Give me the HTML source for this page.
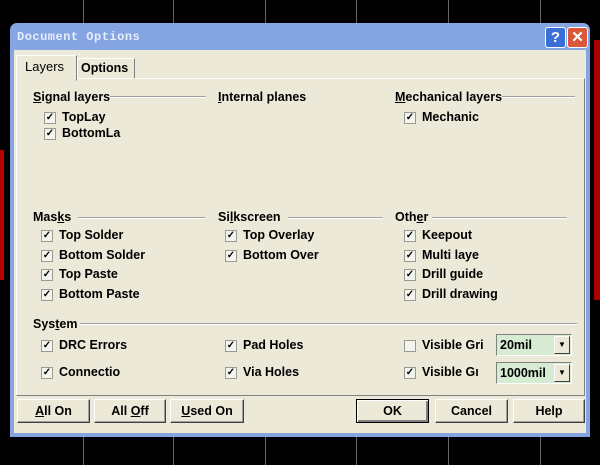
<!DOCTYPE html><html><head><style>
body{margin:0;width:600px;height:465px;background:#000;position:relative;overflow:hidden;font-family:"Liberation Sans",sans-serif;}
.a{position:absolute}
.grid{position:absolute;top:0;width:1px;height:465px;background:#666}
.win{left:10px;top:23px;width:580px;height:414px;background:#84a4e2;border-radius:7px 7px 0 0}
.title{left:17px;top:30px;color:#e8eefc;font:bold 12px "Liberation Mono",monospace;letter-spacing:0.5px}
.body{left:14px;top:50px;width:572px;height:383px;background:#ece9d8}
.t{position:absolute;font-size:12.5px;font-weight:bold;color:#000;white-space:nowrap}
.cb{position:absolute;width:10px;height:10px;background:#f4f4ee;border:1px solid #9a9a90;font-size:10px;line-height:10px;text-align:center;color:#000;font-weight:bold}
.ln{position:absolute;height:1px;background:#a0a0a0;border-bottom:1px solid #fff}
.btn{position:absolute;height:22px;background:#ece9d8;border:1px solid;border-color:#fff #404040 #404040 #fff;box-shadow:inset -1px -1px #a0a0a0;font-size:12.5px;font-weight:bold;text-align:center;line-height:22px}
.cmb{position:absolute;width:74px;height:20px;background:#d5ecd2;border:1px solid;border-color:#808080 #fff #fff #808080}
.cmb span{position:absolute;left:3px;top:3px;font-size:12.5px;font-weight:bold}
.cmb i{position:absolute;right:1px;top:1px;width:16px;height:18px;background:#ece9d8;border:1px solid;border-color:#fff #404040 #404040 #fff;box-sizing:border-box;font-style:normal;font-size:8px;text-align:center;line-height:16px}
</style></head><body>
<div class="grid" style="left:83px"></div><div class="grid" style="left:173px"></div><div class="grid" style="left:265px"></div><div class="grid" style="left:356px"></div><div class="grid" style="left:448px"></div><div class="grid" style="left:540px"></div>
<div class="a" style="left:0;top:150px;width:4px;height:130px;background:#b00"></div>
<div class="a" style="left:594px;top:40px;width:6px;height:260px;background:#a00"></div>
<div class="a win"></div>
<div class="a title">Document Options</div>
<div class="a" style="left:545px;top:27px;width:19px;height:19px;background:#3a6fd8;border:1px solid #fff;border-radius:3px;color:#fff;font-weight:bold;font-size:15px;text-align:center;line-height:19px">?</div>
<div class="a" style="left:567px;top:27px;width:19px;height:19px;background:#d9583a;border:1px solid #fff;border-radius:3px;color:#fff;font-weight:bold;font-size:15px;text-align:center;line-height:19px">✕</div>
<div class="a body"></div>
<div class="a" style="left:16px;top:78px;width:567px;height:316px;border:1px solid;border-color:#fff #808080 #808080 #fff"></div>
<div class="a" style="left:16px;top:55px;width:59px;height:24px;background:#ece9d8;border:1px solid;border-color:#fff #808080 transparent #fff"></div>
<div class="t" style="left:25px;top:59px;font-weight:normal;font-size:13px">Layers</div>
<div class="a" style="left:77px;top:58px;width:56px;height:19px;border:1px solid;border-color:#fff #808080 transparent #fff"></div>
<div class="t" style="left:81px;top:61px">Options</div>

<div class="ln" style="left:110px;top:96px;width:96px"></div>
<div class="ln" style="left:395px;top:96px;width:180px"></div>
<div class="t" style="left:33px;top:90px"><u>S</u>ignal layers</div>
<div class="t" style="left:218px;top:90px"><u>I</u>nternal planes</div>
<div class="t" style="left:395px;top:90px;background:#ece9d8"><u>M</u>echanical layers</div>
<div class="cb" style="left:44px;top:112px">✓</div><div class="t" style="left:62px;top:110px">TopLay</div>
<div class="cb" style="left:44px;top:128px">✓</div><div class="t" style="left:62px;top:126px">BottomLa</div>
<div class="cb" style="left:404px;top:112px">✓</div><div class="t" style="left:422px;top:110px">Mechanic</div>

<div class="ln" style="left:78px;top:217px;width:127px"></div>
<div class="ln" style="left:288px;top:217px;width:95px"></div>
<div class="ln" style="left:432px;top:217px;width:135px"></div>
<div class="t" style="left:33px;top:210px;background:#ece9d8">Mas<u>k</u>s</div>
<div class="t" style="left:218px;top:210px;background:#ece9d8">Si<u>l</u>kscreen</div>
<div class="t" style="left:395px;top:210px;background:#ece9d8">Oth<u>e</u>r</div>

<div class="cb" style="left:41px;top:230px">✓</div><div class="t" style="left:59px;top:228px">Top Solder</div>
<div class="cb" style="left:41px;top:250px">✓</div><div class="t" style="left:59px;top:248px">Bottom Solder</div>
<div class="cb" style="left:41px;top:269px">✓</div><div class="t" style="left:59px;top:267px">Top Paste</div>
<div class="cb" style="left:41px;top:289px">✓</div><div class="t" style="left:59px;top:287px">Bottom Paste</div>
<div class="cb" style="left:225px;top:230px">✓</div><div class="t" style="left:243px;top:228px">Top Overlay</div>
<div class="cb" style="left:225px;top:250px">✓</div><div class="t" style="left:243px;top:248px">Bottom Over</div>
<div class="cb" style="left:404px;top:230px">✓</div><div class="t" style="left:422px;top:228px">Keepout</div>
<div class="cb" style="left:404px;top:250px">✓</div><div class="t" style="left:422px;top:248px">Multi laye</div>
<div class="cb" style="left:404px;top:269px">✓</div><div class="t" style="left:422px;top:267px">Drill guide</div>
<div class="cb" style="left:404px;top:289px">✓</div><div class="t" style="left:422px;top:287px">Drill drawing</div>

<div class="ln" style="left:80px;top:323px;width:497px"></div>
<div class="t" style="left:33px;top:317px">Sys<u>t</u>em</div>
<div class="cb" style="left:41px;top:340px">✓</div><div class="t" style="left:59px;top:338px">DRC Errors</div>
<div class="cb" style="left:41px;top:367px">✓</div><div class="t" style="left:59px;top:365px">Connectio</div>
<div class="cb" style="left:225px;top:340px">✓</div><div class="t" style="left:243px;top:338px">Pad Holes</div>
<div class="cb" style="left:225px;top:367px">✓</div><div class="t" style="left:243px;top:365px">Via Holes</div>
<div class="cb" style="left:404px;top:340px"></div><div class="t" style="left:422px;top:338px">Visible Gri</div>
<div class="cb" style="left:404px;top:367px">✓</div><div class="t" style="left:422px;top:365px">Visible Gı</div>
<div class="cmb" style="left:496px;top:334px"><span>20mil</span><i>▼</i></div>
<div class="cmb" style="left:496px;top:362px"><span>1000mil</span><i>▼</i></div>

<div class="btn" style="left:17px;top:399px;width:71px"><u>A</u>ll On</div>
<div class="btn" style="left:94px;top:399px;width:70px">All <u>O</u>ff</div>
<div class="btn" style="left:170px;top:399px;width:72px"><u>U</u>sed On</div>
<div class="btn" style="left:356px;top:399px;width:71px;border:1px solid #000;box-shadow:inset 1px 1px #fff,inset -2px -2px #808080">OK</div>
<div class="btn" style="left:435px;top:399px;width:71px">Cancel</div>
<div class="btn" style="left:513px;top:399px;width:70px">Help</div>
</body></html>
